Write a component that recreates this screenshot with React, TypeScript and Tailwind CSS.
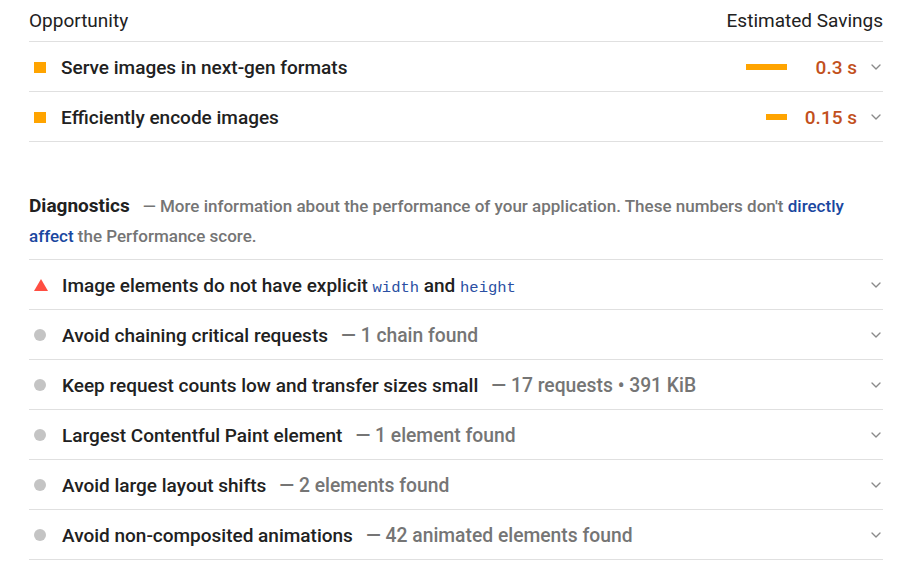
import { ChevronDown } from 'lucide-react';

type Opp = { title: string; bar: number; value: string };
type Diag = { title: React.ReactNode; detail?: string; icon: 'fail' | 'info' };

const opportunities: Opp[] = [
  { title: 'Serve images in next-gen formats', bar: 41, value: '0.3 s' },
  { title: 'Efficiently encode images', bar: 21, value: '0.15 s' },
];

const code = "font-['Liberation_Mono',monospace] text-[15.5px] font-normal text-[#2a4fa3]";

const diagnostics: Diag[] = [
  {
    icon: 'fail',
    title: (
      <>
        Image elements do not have explicit <span className={code}>width</span> and{' '}
        <span className={code}>height</span>
      </>
    ),
  },
  { icon: 'info', title: 'Avoid chaining critical requests', detail: '1 chain found' },
  { icon: 'info', title: 'Keep request counts low and transfer sizes small', detail: '17 requests • 391 KiB' },
  { icon: 'info', title: 'Largest Contentful Paint element', detail: '1 element found' },
  { icon: 'info', title: 'Avoid large layout shifts', detail: '2 elements found' },
  { icon: 'info', title: 'Avoid non-composited animations', detail: '42 animated elements found' },
];

function Chevron() {
  return <ChevronDown className="w-[16px] h-[16px] text-[#8a8a8a]" strokeWidth={2} />;
}

export default function App() {
  return (
    <main className="min-h-screen bg-white pl-[29px] pr-[24px] font-['Roboto',sans-serif] text-[#212121]">
      {/* Opportunities */}
      <div className="flex items-center justify-between h-[42px] border-b border-[#e0e0e0] text-[19px] pt-[1px]">
        <span>Opportunity</span>
        <span>Estimated Savings</span>
      </div>
      {opportunities.map((o) => (
        <div key={o.title} className="flex items-center h-[50px] border-b border-[#e0e0e0] pl-[5px] pt-[3px]">
          <span className="w-[12px] h-[11px] bg-[#ffa400] shrink-0 mt-[-2px]" />
          <span className="ml-[15px] text-[19px] font-medium flex-1">{o.title}</span>
          <span className="h-[6px] bg-[#ffa400] mt-[-2px]" style={{ width: o.bar }} />
          <span className="w-[70px] text-right text-[19px] font-medium text-[#c2501c]">{o.value}</span>
          <span className="ml-[11px] mr-[-1px] mt-[-2px]">
            <Chevron />
          </span>
        </div>
      ))}

      {/* Diagnostics */}
      <div className="mt-[49px] pb-[8px] leading-[30px] text-[17px] font-medium text-[#757575]">
        <span className="text-[19px] font-bold text-[#212121] mr-[13px]">Diagnostics</span>
        — More information about the performance of your application. These numbers don't{' '}
        <span className="text-[#1a47a0]">directly affect</span> the Performance score.
      </div>
      <div className="border-t border-[#e0e0e0]">
        {diagnostics.map((d, i) => (
          <div key={i} className="flex items-center h-[50px] border-b border-[#e0e0e0] pl-[5px] pt-[3px]">
            {d.icon === 'fail' ? (
              <svg width="14" height="12" viewBox="0 0 14 12" className="shrink-0 mt-[-2px]">
                <polygon points="7,0 14,12 0,12" fill="#ff4e42" />
              </svg>
            ) : (
              <span className="w-[12px] h-[12px] rounded-full bg-[#c4c4c4] shrink-0 mt-[-2px]" />
            )}
            <span className={`${d.icon === 'fail' ? 'ml-[14px]' : 'ml-[16px]'} text-[19px] font-medium flex-1`}>
              {d.title}
              {d.detail && (
                <span className="ml-[13px] text-[#757575] text-[19.3px]">— {d.detail}</span>
              )}
            </span>
            <span className="mr-[-1px] mt-[-2px]">
              <Chevron />
            </span>
          </div>
        ))}
      </div>
    </main>
  );
}
